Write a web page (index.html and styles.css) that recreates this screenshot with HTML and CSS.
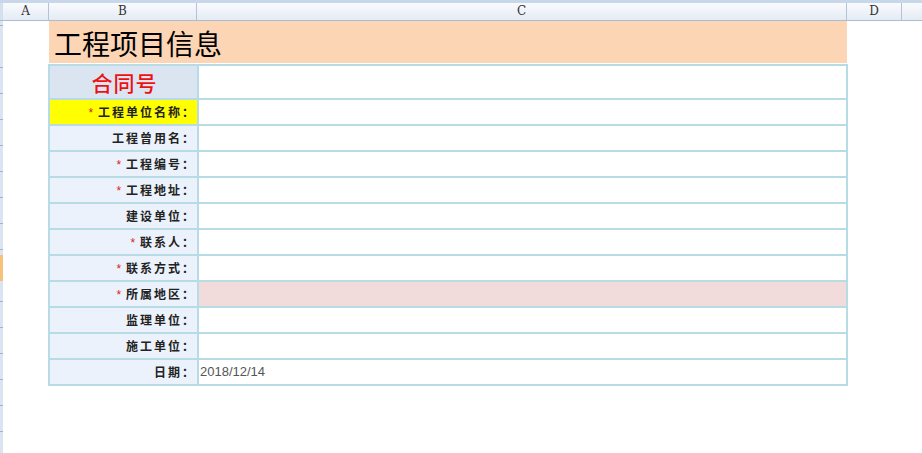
FILE: index.html
```html
<!DOCTYPE html>
<html lang="zh">
<head>
<meta charset="utf-8">
<title>工程项目信息</title>
<link rel="stylesheet" href="styles.css">
</head>
<body>
<div class="topline"></div>
<div class="colheads">
  <div class="corner"></div>
  <div class="ch ch-a">A</div>
  <div class="ch ch-b">B</div>
  <div class="ch ch-c">C</div>
  <div class="ch ch-d">D</div>
  <div class="ch ch-e"></div>
</div>
<div class="sheet">
  <div class="rowstrip"><div class="rowsel"></div></div>
  <div class="content">
    <div class="title">工程项目信息</div>
    <div class="form">
      <div class="lbl lbl-head">合同号</div><div class="val val-head"></div>
      <div class="lbl lbl-yellow"><span class="req">*</span> 工程单位名称：</div><div class="val"></div>
      <div class="lbl">工程曾用名：</div><div class="val"></div>
      <div class="lbl"><span class="req">*</span> 工程编号：</div><div class="val"></div>
      <div class="lbl"><span class="req">*</span> 工程地址：</div><div class="val"></div>
      <div class="lbl">建设单位：</div><div class="val"></div>
      <div class="lbl"><span class="req">*</span> 联系人：</div><div class="val"></div>
      <div class="lbl"><span class="req">*</span> 联系方式：</div><div class="val"></div>
      <div class="lbl"><span class="req">*</span> 所属地区：</div><div class="val val-pink"></div>
      <div class="lbl">监理单位：</div><div class="val"></div>
      <div class="lbl">施工单位：</div><div class="val"></div>
      <div class="lbl">日期：</div><div class="val val-text">2018/12/14</div>
    </div>
  </div>
</div>
</body>
</html>
```
FILE: styles.css
```css
html, body {
  margin: 0;
  padding: 0;
  background: #ffffff;
  width: 922px;
  height: 453px;
  overflow: hidden;
  font-family: "Noto Sans CJK SC", "DejaVu Sans", sans-serif;
}

.topline {
  height: 3px;
  background: #c9d7ea;
}

.colheads {
  display: flex;
  height: 18px;
  background: linear-gradient(#f9fbfd, #e4ebf4);
  border-bottom: 1px solid #a9bdd6;
  box-sizing: border-box;
}

.corner {
  width: 3px;
  flex: none;
  background: #d5e0ee;
}

.ch {
  flex: none;
  box-sizing: border-box;
  border-right: 1px solid #b2c3d8;
  font-family: "DejaVu Serif", "Liberation Serif", serif;
  font-size: 12px;
  line-height: 17px;
  color: #333;
  text-align: center;
}

.ch-a { width: 46px; }
.ch-b { width: 148px; }
.ch-c { width: 650px; }
.ch-d { width: 55px; }
.ch-e { flex: 1; border-right: none; }

.sheet {
  display: flex;
  height: 432px;
}

.rowstrip {
  width: 3px;
  flex: none;
  position: relative;
  background:
    repeating-linear-gradient(to bottom, transparent 0 25px, #9fb4cf 25px 26px),
    #dbe5f1;
  background-position: 0 21px, 0 0;
}

.rowsel {
  position: absolute;
  left: 0;
  top: 234px;
  width: 3px;
  height: 26px;
  background: #f6c27a;
}

.content {
  padding-left: 46px;
}

.title {
  width: 798px;
  height: 42px;
  background: #fcd5b4;
  font-size: 28px;
  line-height: 44px;
  color: #000;
  padding-left: 5px;
  box-sizing: border-box;
}

.form {
  margin-left: -1px;
  margin-top: 1px;
  width: 800px;
  box-sizing: border-box;
  padding: 2px;
  background: #b7dce6;
  display: grid;
  grid-template-columns: 147px 647px;
  grid-template-rows: 32px repeat(11, 24px);
  gap: 2px;
}

.lbl {
  background: #ebf2fb;
  text-align: right;
  padding-right: 1px;
  font-size: 12px;
  font-weight: bold;
  letter-spacing: 2px;
  line-height: 24px;
  color: #222;
}

.req {
  color: #e02020;
  font-weight: normal;
  letter-spacing: 0;
  font-family: "Liberation Sans", sans-serif;
}

.lbl-yellow {
  background: #ffff00;
}

.lbl-head {
  background: #dbe5f1;
  text-align: center;
  padding-right: 0;
  padding-left: 2px;
  color: #ee1111;
  font-size: 21px;
  font-weight: 500;
  line-height: 32px;
  letter-spacing: 1px;
}

.val {
  background: #ffffff;
}

.val-pink {
  background: #f2dcdb;
}

.val-text {
  font-family: "Liberation Sans", Arial, sans-serif;
  font-size: 13px;
  line-height: 24px;
  color: #555;
  padding-left: 1px;
}
```
